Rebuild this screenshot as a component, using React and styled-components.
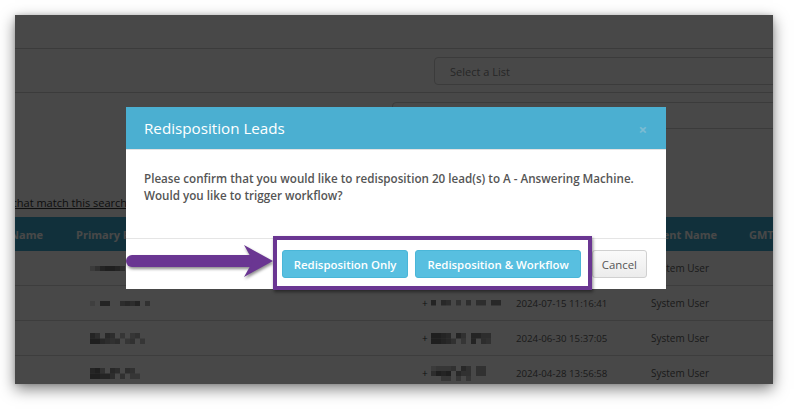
import React from "react";
import styled, { createGlobalStyle } from "styled-components";

const Global = createGlobalStyle`
  html, body { margin: 0; padding: 0; background: #fff; }
  body { font-family: "Open Sans", "Liberation Sans", sans-serif; }
  * { box-sizing: border-box; }
`;

const PURPLE = "#6a3692";

const Stage = styled.div`
  width: 798px;
  height: 409px;
  padding: 15px;
  background: #fff;
`;

const Window = styled.div`
  position: relative;
  width: 758px;
  height: 369px;
  overflow: hidden;
  background: #fff;
  box-shadow: 0 5px 14px rgba(0, 0, 0, 0.5), 0 0 4px rgba(0, 0, 0, 0.15);
`;

const Page = styled.div`
  display: flex;
  flex-direction: column;
  width: 100%;
`;

const TopBar = styled.div`
  height: 34px;
  border-bottom: 1px solid #d2d2d2;
`;

const FilterBar = styled.div`
  display: flex;
  height: 44px;
  padding: 8px 0 0 419px;
  border-bottom: 1px solid #d2d2d2;
`;

const SelectBox = styled.div`
  flex-shrink: 0;
  width: 380px;
  height: 28px;
  padding: 0 15px;
  display: flex;
  align-items: center;
  border: 1px solid #cfcfcf;
  border-radius: 4px;
  font-size: 11px;
  color: #8a8a8a;
`;

const SearchRow = styled.div`
  display: flex;
  padding: 9px 0 0 377px;
`;

const SearchBox = styled.div`
  flex-shrink: 0;
  width: 420px;
  height: 27px;
  border: 1px solid #cfcfcf;
  border-radius: 4px;
`;

const Note = styled.p`
  margin: 66px 0 0 -35px;
  height: 16px;
  font-size: 11px;
  line-height: 16px;
  color: #333;
  text-decoration: underline;
  white-space: nowrap;
`;

const cols = "61px 180px 156px 103px 134px 100px 1fr";

const HeadRow = styled.div`
  display: grid;
  grid-template-columns: ${cols};
  height: 34px;
  margin-top: 6px;
  background: #3dabcf;
`;

const HeadCell = styled.div`
  display: flex;
  align-items: center;
  justify-content: ${(p) => (p.$end ? "flex-end" : "flex-start")};
  padding-right: ${(p) => (p.$end ? "33px" : "0")};
  font-size: 11px;
  font-weight: 700;
  color: #fff;
  white-space: nowrap;
  overflow: hidden;
`;

const Row = styled.div`
  display: grid;
  grid-template-columns: ${cols};
  height: 35px;
  border-bottom: 1px solid #d8d8d8;
`;

const Cell = styled.div`
  display: flex;
  align-items: center;
  gap: 3px;
  padding-left: ${(p) => p.$indent || 0}px;
  font-size: ${(p) => p.$size || 10}px;
  color: #5e5e5e;
  white-space: nowrap;
`;

const Plus = styled.span`
  font-size: 10px;
  color: #444;
`;

/* Pixelated, redacted phone number: each digit is one block's darkness. */
function Mosaic({ rows, bw = 5, bh = 5 }) {
  const w = Math.max(...rows.map((r) => r.length)) * bw;
  const h = rows.length * bh;
  return (
    <svg width={w} height={h} viewBox={`0 0 ${w} ${h}`} style={{ display: "block" }}>
      {rows.map((r, y) =>
        r.split("").map((c, x) =>
          c === " " ? null : (
            <rect
              key={`${x}-${y}`}
              x={x * bw}
              y={y * bh}
              width={bw}
              height={bh}
              fill="#000"
              opacity={Number(c) / 16}
            />
          )
        )
      )}
    </svg>
  );
}

const Backdrop = styled.div`
  position: absolute;
  inset: 0;
  background: rgba(0, 0, 0, 0.718);
`;

const Modal = styled.div`
  position: absolute;
  left: 111px;
  top: 92px;
  width: 540px;
  background: #fff;
  display: flex;
  flex-direction: column;
`;

const ModalHeader = styled.div`
  height: 43px;
  padding: 0 19px 0 18px;
  display: flex;
  align-items: center;
  justify-content: space-between;
  background: #4bafd1;
  border-bottom: 1px solid #e2e2e2;
`;

const Title = styled.h4`
  margin: 0;
  font-size: 15.2px;
  font-weight: 400;
  color: #fff;
`;

const Close = styled.span`
  font-size: 15px;
  line-height: 1;
  font-weight: 700;
  color: #7cbcd3;
  margin-top: 3px;
`;

const ModalBody = styled.div`
  padding: 20px 18px 34px;
  font-size: 11.65px;
  line-height: 17px;
  font-weight: 600;
  color: #555;
`;

const ModalFooter = styled.div`
  display: flex;
  justify-content: flex-end;
  align-items: center;
  padding: 11px 19px 11px;
  border-top: 1px solid #e5e5e5;
`;

const Button = styled.button`
  height: 28px;
  padding: 0 ${(p) => (p.$plain ? "9px" : "11px")};
  margin-left: ${(p) => p.$gap || 0}px;
  border-radius: 3px;
  font-family: inherit;
  font-size: 11.4px;
  font-weight: ${(p) => (p.$plain ? 400 : 600)};
  color: ${(p) => (p.$plain ? "#555" : "#fff")};
  background: ${(p) => (p.$plain ? "linear-gradient(#fafafa, #ececec)" : "#58bfe0")};
  border: 1px solid ${(p) => (p.$plain ? "#d0d0d0" : "#4ab6d8")};
  white-space: nowrap;
  cursor: pointer;
`;

const Callout = styled.div`
  position: absolute;
  left: 258px;
  top: 221px;
  width: 319px;
  height: 54px;
  border: 4px solid ${PURPLE};
  box-shadow: 1px 2px 3px rgba(0, 0, 0, 0.45);
`;

const ArrowMark = styled.svg`
  position: absolute;
  left: 111px;
  top: 228px;
  filter: drop-shadow(1px 2px 1.5px rgba(0, 0, 0, 0.45));
`;

const rows = [
  {
    phone: ["3589986"],
    alt: null,
    date: "",
    user: "System User",
  },
  {
    phone: ["2 88  6768 5"],
    alt: ["8 76 5 6 66 77"],
    date: "2024-07-15 11:16:41",
    user: "System User",
  },
  {
    phone: ["86 76 4 45 ", "997656 45 4"],
    alt: ["9987 85 8866 ", "99875 4 8 65 "],
    date: "2024-06-30 15:37:05",
    user: "System User",
  },
  {
    phone: ["895 76 65 ", "99886 5 44 "],
    alt: ["34445 75 55 ", "6989 755 55 ", "  44 4 4  "],
    date: "2024-04-28 13:56:58",
    user: "System User",
  },
];

export default function App() {
  return (
    <>
      <Global />
      <Stage>
        <Window>
          <Page>
            <TopBar />
            <FilterBar>
              <SelectBox>Select a List</SelectBox>
            </FilterBar>
            <SearchRow>
              <SearchBox />
            </SearchRow>
            <Note>Leads that match this search</Note>
            <HeadRow>
              <HeadCell $end>Last Name</HeadCell>
              <HeadCell>Primary Phone</HeadCell>
              <HeadCell>Email</HeadCell>
              <HeadCell>Mobile Phone</HeadCell>
              <HeadCell>Date Modified</HeadCell>
              <HeadCell>Agent Name</HeadCell>
              <HeadCell>GMT Offset</HeadCell>
            </HeadRow>
            {rows.map((r, i) => (
              <Row key={i}>
                <Cell />
                <Cell $indent={14}>
                  <Mosaic rows={r.phone} bw={5} bh={r.phone.length > 1 ? 5.5 : 5} />
                </Cell>
                <Cell />
                <Cell $indent={10}>
                  {r.alt && (
                    <>
                      <Plus>+</Plus>
                      <Mosaic rows={r.alt} bw={5} bh={r.alt.length > 2 ? 5 : 5.5} />
                    </>
                  )}
                </Cell>
                <Cell $indent={1} $size={9.7}>{r.date}</Cell>
                <Cell $indent={2}>{r.user}</Cell>
                <Cell />
              </Row>
            ))}
          </Page>

          <Backdrop />

          <Modal role="dialog" aria-label="Redisposition Leads">
            <ModalHeader>
              <Title>Redisposition Leads</Title>
              <Close>×</Close>
            </ModalHeader>
            <ModalBody>
              Please confirm that you would like to redisposition 20 lead(s) to A - Answering Machine.
              <br />
              Would you like to trigger workflow?
            </ModalBody>
            <ModalFooter>
              <Button>Redisposition Only</Button>
              <Button $gap={7}>Redisposition &amp; Workflow</Button>
              <Button $plain $gap={11}>Cancel</Button>
            </ModalFooter>
          </Modal>

          <ArrowMark width="150" height="36" viewBox="0 0 150 36">
            <line x1="6" y1="18" x2="130" y2="18" stroke={PURPLE} strokeWidth="12" strokeLinecap="round" />
            <polygon points="147,18 118,2 127,18 118,34" fill={PURPLE} />
          </ArrowMark>

          <Callout />
        </Window>
      </Stage>
    </>
  );
}
